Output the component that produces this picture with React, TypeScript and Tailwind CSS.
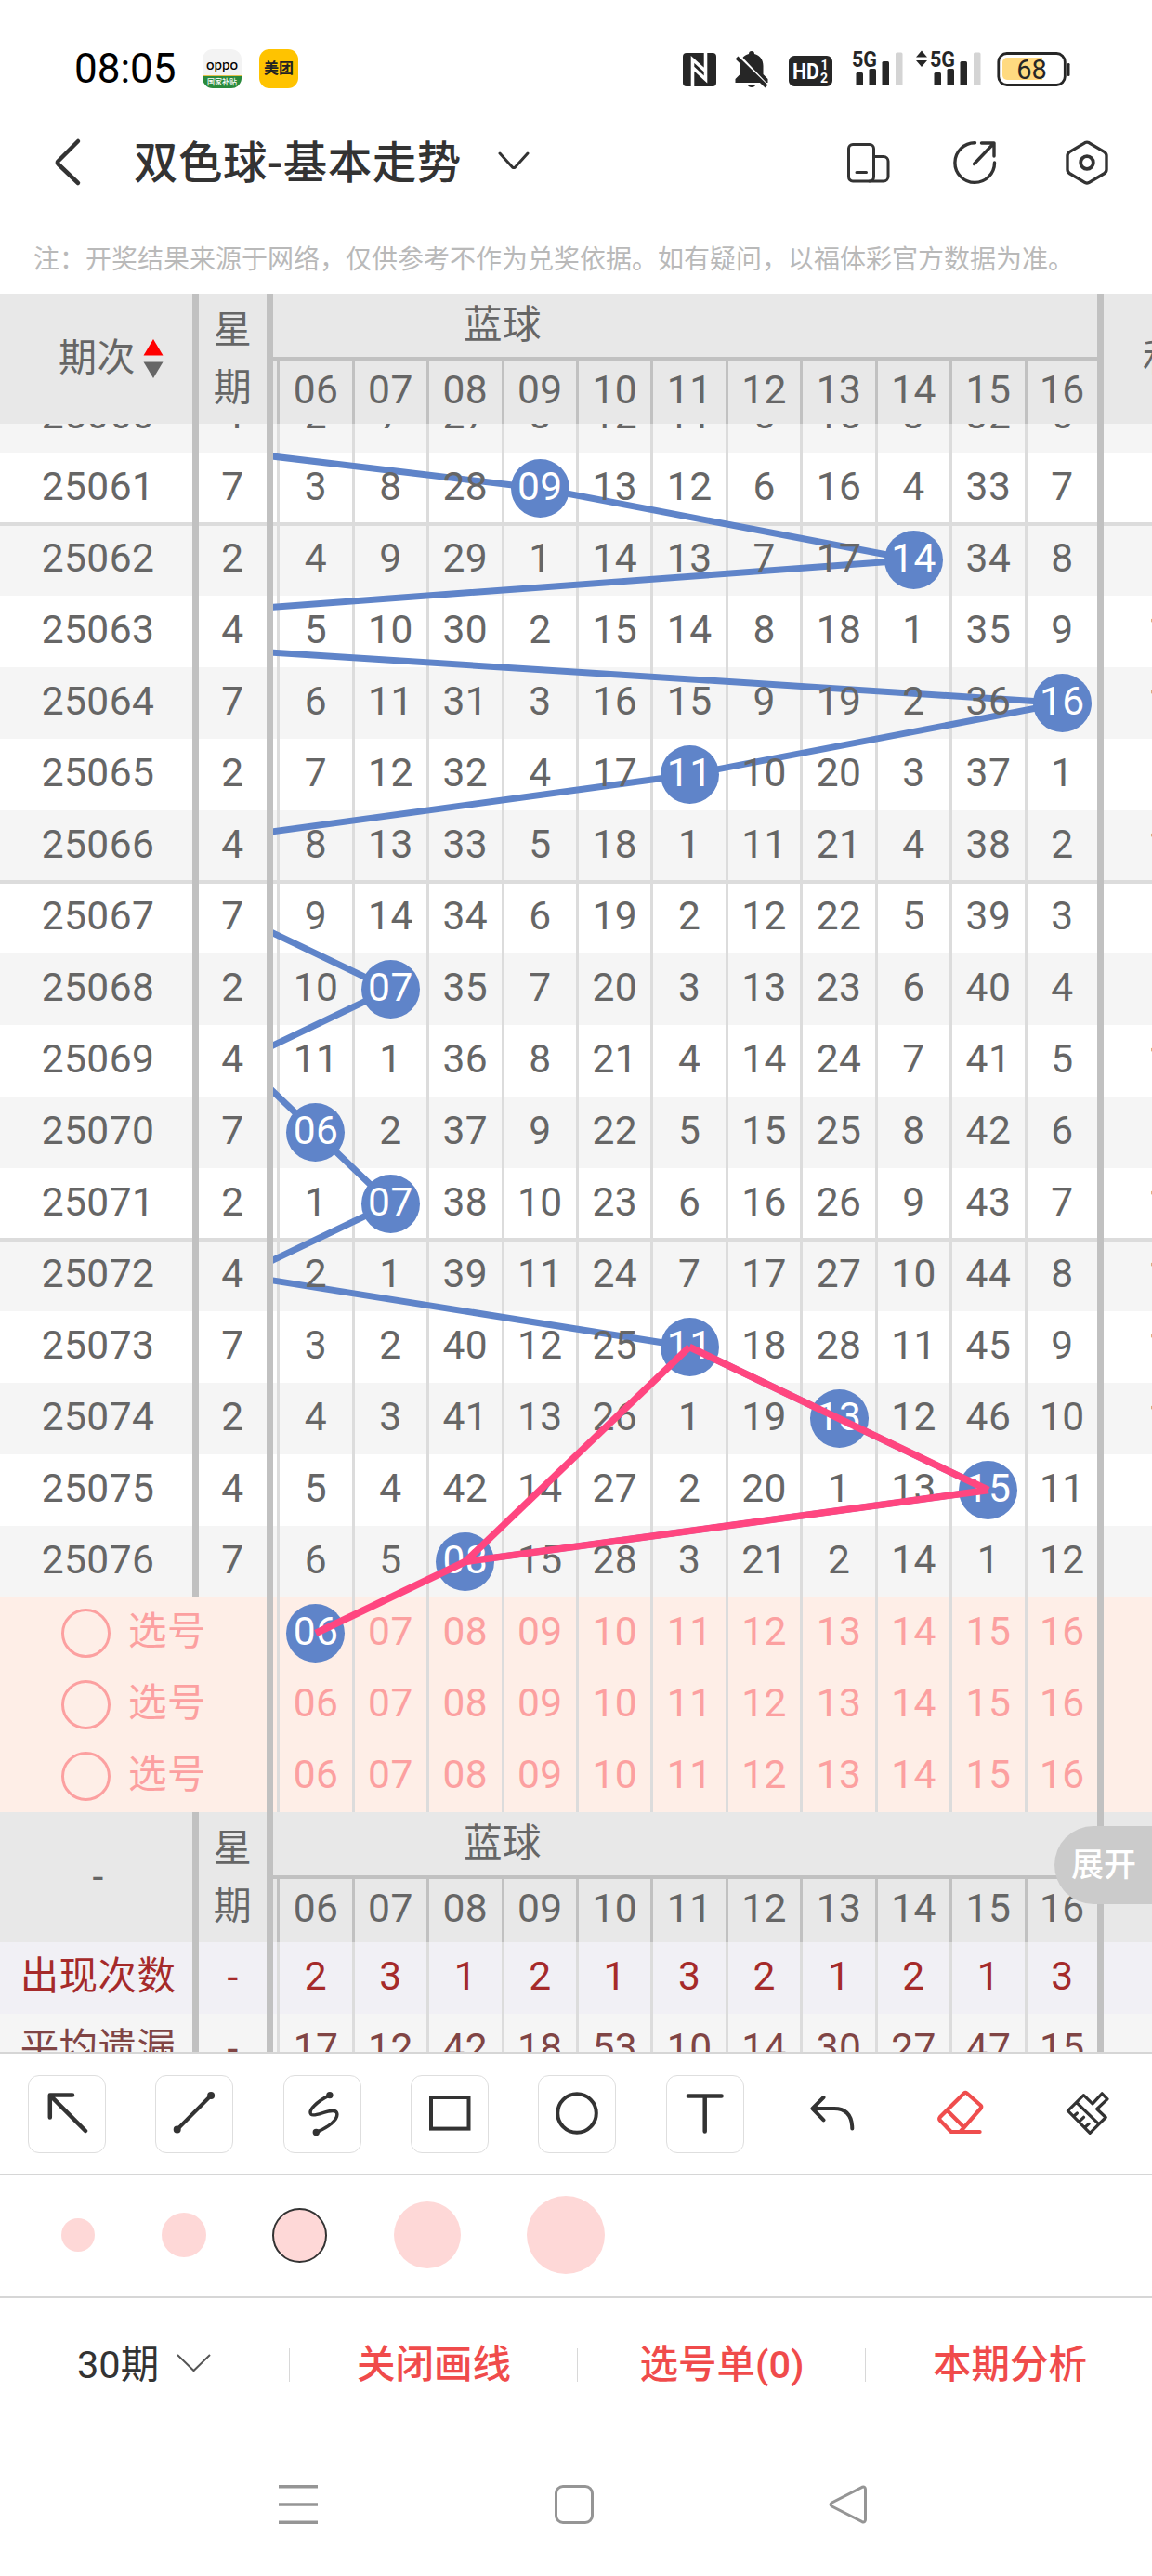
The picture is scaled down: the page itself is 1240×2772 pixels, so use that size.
import React from "react";

interface Period {
  id: string;
  week: string;
  values: number[];
  // winning blue ball, 1 - 16
  ball: number;
  sum?: string;
}

const COLUMNS = [6, 7, 8, 9, 10, 11, 12, 13, 14, 15, 16];
const ROW_HEIGHT = 77;
const COL_WIDTH = 80.45;
const CLIPPED_TOP = 46;

const PERIODS: Period[] = [
  { id: "25060", week: "4", ball: 1, values: [2, 7, 27, 8, 12, 11, 5, 15, 3, 32, 6] },
  { id: "25061", week: "7", ball: 9, values: [3, 8, 28, 9, 13, 12, 6, 16, 4, 33, 7] },
  { id: "25062", week: "2", ball: 14, values: [4, 9, 29, 1, 14, 13, 7, 17, 14, 34, 8] },
  { id: "25063", week: "4", ball: 1, values: [5, 10, 30, 2, 15, 14, 8, 18, 1, 35, 9], sum: "1" },
  { id: "25064", week: "7", ball: 16, values: [6, 11, 31, 3, 16, 15, 9, 19, 2, 36, 16], sum: "1" },
  { id: "25065", week: "2", ball: 11, values: [7, 12, 32, 4, 17, 11, 10, 20, 3, 37, 1] },
  { id: "25066", week: "4", ball: 4, values: [8, 13, 33, 5, 18, 1, 11, 21, 4, 38, 2], sum: "1" },
  { id: "25067", week: "7", ball: 5, values: [9, 14, 34, 6, 19, 2, 12, 22, 5, 39, 3] },
  { id: "25068", week: "2", ball: 7, values: [10, 7, 35, 7, 20, 3, 13, 23, 6, 40, 4] },
  { id: "25069", week: "4", ball: 5, values: [11, 1, 36, 8, 21, 4, 14, 24, 7, 41, 5], sum: "1" },
  { id: "25070", week: "7", ball: 6, values: [6, 2, 37, 9, 22, 5, 15, 25, 8, 42, 6] },
  { id: "25071", week: "2", ball: 7, values: [1, 7, 38, 10, 23, 6, 16, 26, 9, 43, 7], sum: "1" },
  { id: "25072", week: "4", ball: 5, values: [2, 1, 39, 11, 24, 7, 17, 27, 10, 44, 8], sum: "1" },
  { id: "25073", week: "7", ball: 11, values: [3, 2, 40, 12, 25, 11, 18, 28, 11, 45, 9], sum: "1" },
  { id: "25074", week: "2", ball: 13, values: [4, 3, 41, 13, 26, 1, 19, 13, 12, 46, 10], sum: "1" },
  { id: "25075", week: "4", ball: 15, values: [5, 4, 42, 14, 27, 2, 20, 1, 13, 15, 11] },
  { id: "25076", week: "7", ball: 8, values: [6, 5, 8, 15, 28, 3, 21, 2, 14, 1, 12] },
];

const STATS = [
  {
    label: "出现次数",
    values: [2, 3, 1, 2, 1, 3, 2, 1, 2, 1, 3],
    className: "bg-[#f1f0f5] text-[#a52a2a]",
  },
  {
    label: "平均遗漏",
    values: [17, 12, 42, 18, 53, 10, 14, 30, 27, 47, 15],
    className: "bg-[#f5f5f5] text-[#804545]",
  },
];

const pad = (n: number) => String(n).padStart(2, "0");

// Chart coordinates, relative to the left edge of the blue ball area
const ballX = (ball: number) => 45.9 + (ball - 6) * COL_WIDTH;
const rowY = (row: number) => row * ROW_HEIGHT + ROW_HEIGHT / 2 - CLIPPED_TOP;

const trendPoints = PERIODS.map((p, i) => `${ballX(p.ball)},${rowY(i)}`).join(" ");

const userLines = [
  { from: [11, 13], to: [15, 15] },
  { from: [15, 15], to: [8, 16] },
  { from: [11, 13], to: [8, 16] },
  { from: [8, 16], to: [6, 17] },
];

const Bar = () => <div className="w-[7px] shrink-0 bg-[#c1c1c1]" />;

const Ball = ({ value }: { value: number }) => (
  <span className="relative z-10 flex h-[63px] w-[63px] shrink-0 items-center justify-center rounded-full bg-[#5f84c9] pb-[3px] text-white">
    {pad(value)}
  </span>
);

interface NumberCellsProps {
  border: string;
  children: (column: number, index: number) => React.ReactNode;
}

const NumberCells: React.FC<NumberCellsProps> = ({ border, children }) => (
  <div className="flex h-full w-[887px] shrink-0 pl-[4.25px]">
    {COLUMNS.map((column, i) => (
      <div
        key={column}
        className={`flex items-center justify-center border-l-[3px] ${border} ${
          i === COLUMNS.length - 1 ? "min-w-0 flex-1" : "w-[80.45px] shrink-0"
        }`}
      >
        {children(column, i)}
      </div>
    ))}
  </div>
);

const Num = ({ children }: { children: React.ReactNode }) => (
  <span className="relative z-10 pb-[3px]">{children}</span>
);

const TableHeader = ({ label, sum }: { label: React.ReactNode; sum?: string }) => (
  <div className="flex h-[140px] shrink-0 overflow-hidden bg-[#e8e8e8] text-[#666]">
    <div className="flex w-[207px] shrink-0 items-center justify-center">{label}</div>
    <Bar />
    <div className="flex w-[73px] shrink-0 flex-col items-center justify-center pb-px leading-[62px] text-[41px]">
      <span>星</span>
      <span>期</span>
    </div>
    <Bar />
    <div className="flex w-[887px] shrink-0 flex-col">
      <div className="flex h-[68px] items-center pl-[205px] text-[41.5px]">蓝球</div>
      <div className="h-1 bg-[#c1c1c1]" />
      <div className="h-[68px]">
        <NumberCells border="border-[#c1c1c1]">{(c) => <Num>{pad(c)}</Num>}</NumberCells>
      </div>
    </div>
    <Bar />
    <div className="flex w-[52px] shrink-0 items-center overflow-hidden pl-[42px]">{sum}</div>
  </div>
);

const StatusBar = () => (
  <div className="flex h-[125px] items-center pl-20 pr-[87px] pt-[23px]">
    <span className="w-[138px] text-[44px] leading-none text-black">08:05</span>
    <div className="mr-[19px] flex h-[42px] w-[42px] flex-col items-center overflow-hidden rounded-[11px] bg-[#f3f3f3]">
      <span className="h-7 font-['Lato'] text-[15px] font-medium leading-[33px] text-black">oppo</span>
      <span className="flex h-[14px] w-full items-center justify-center border-t border-[#e7c14b] bg-[#2a8a3c] text-[8px] font-medium leading-none text-white">
        国家补贴
      </span>
    </div>
    <div className="flex h-[42px] w-[42px] items-center justify-center rounded-[11px] bg-[#ffc300] text-[16px] font-bold leading-none text-[#222]">
      美团
    </div>
    <svg className="ml-auto h-[44px] w-[420px]" viewBox="733 52 420 44" fill="#262626">
      {/* NFC */}
      <rect x="735" y="57" width="36" height="36" rx="4" />
      <path d="M745.5 93V64l14.5 13M759.5 57v28.5L746 73" fill="none" stroke="#fff" strokeWidth="3.6" />
      {/* muted bell */}
      <path d="M809 55c2 0 3 1.200 3 3 6 1.500 9.500 6 9.500 13v9l5 5v4h-35v-4l5-5v-9c0-7 3.500-11.500 9.500-13 0-1.800 1-3 3-3zM804.500 91h9c-1 4-8 4-9 0z" />
      <path d="M795 60l33 35" stroke="#fff" strokeWidth="4" />
      <path d="M793 62l32 31" stroke="#262626" strokeWidth="4" />
      {/* HD 1/2 */}
      <rect x="849" y="60" width="47" height="33" rx="6" />
      <g fill="#fff" fontWeight="700">
        <text x="853" y="85" fontSize="24" textLength="29" lengthAdjust="spacingAndGlyphs">HD</text>
        <text x="883.500" y="75" fontSize="14">1</text>
        <text x="883" y="89" fontSize="14">2</text>
      </g>
      <g fontWeight="700" fontSize="24">
        <text x="917" y="71.500" textLength="27" lengthAdjust="spacingAndGlyphs">5G</text>
        <text x="1001" y="71.500" textLength="27" lengthAdjust="spacingAndGlyphs">5G</text>
      </g>
      {[0, 84].map((dx) => (
        <g key={dx} transform={`translate(${dx} 0)`}>
          <rect x="921.500" y="78" width="7.500" height="14" rx="1.500" />
          <rect x="935.500" y="74" width="7.500" height="18" rx="1.500" />
          <rect x="949.500" y="66" width="7.500" height="26" rx="1.500" />
          <rect x="964" y="56.500" width="7.500" height="35.500" rx="1.500" fill="#d4d4d4" />
        </g>
      ))}
      <path d="M992 54.500l6 7h-12zM992 72l6-7h-12z" />
      {/* battery */}
      <rect x="1074.800" y="57.500" width="71.500" height="34" rx="9" fill="none" stroke="#262626" strokeWidth="2.800" />
      <path d="M1084 62h38v24h-38a5 5 0 0 1-5-5V67a5 5 0 0 1 5-5z" fill="#ffda80" />
      <rect x="1148.800" y="68" width="2.700" height="14" rx="1.300" />
      <text x="1110.500" y="84.500" fontSize="29" textAnchor="middle">68</text>
    </svg>
  </div>
);

const TitleBar = () => (
  <div className="flex h-[100px] items-center pl-[58px] pr-[45px] text-[#333]">
    <svg className="h-[54px] w-[30px]" viewBox="0 0 30 54" fill="none" stroke="currentColor" strokeWidth="4.500" strokeLinecap="round" strokeLinejoin="round">
      <path d="M26 4L4.500 25.500a2 2 0 0 0 0 3L26 49" />
    </svg>
    <h1 className="ml-14 pt-[3px] text-[47.5px] font-medium leading-none tracking-[0.5px]">双色球-基本走势</h1>
    <svg className="ml-[38px] h-6 w-9" viewBox="0 0 36 24" fill="none" stroke="currentColor" strokeWidth="3" strokeLinecap="round" strokeLinejoin="round">
      <path d="M3 2l14 15.500h2L33 2" />
    </svg>
    <svg className="ml-auto h-[50px] w-[50px]" viewBox="0 0 50 50" fill="none" stroke="currentColor" strokeWidth="3">
      <rect x="3.500" y="5.500" width="27" height="39.500" rx="4.500" />
      <path d="M30.500 18.500H41a5 5 0 0 1 5 5V40a5 5 0 0 1-5 5H26M12 35.500h10.500" strokeLinecap="round" />
    </svg>
    <svg className="ml-[64px] h-[50px] w-[50px]" viewBox="0 0 50 50" fill="none" stroke="currentColor" strokeWidth="3.400" strokeLinecap="round" strokeLinejoin="round">
      <path d="M25.500 3.800A21.300 21.300 0 1 0 46.500 25M32.500 4H46v14M46 4L24.500 26.500" />
    </svg>
    <svg className="ml-[71px] h-[50px] w-[50px]" viewBox="0 0 50 50" fill="none" stroke="currentColor" strokeWidth="3.400" strokeLinejoin="round">
      <path d="M27 3.600l16.500 9.800q2.500 1.600 2.500 4.200v15q0 2.600-2.500 4.200L27 46.600q-2 1-4 0L6.500 36.800Q4 35.200 4 32.600v-15q0-2.600 2.500-4.200L23 3.600q2-1 4 0z" />
      <circle cx="25" cy="25" r="6.800" strokeWidth="3.800" />
    </svg>
  </div>
);

const TrendTable = () => (
  <div className="relative h-[1752px] shrink-0 overflow-hidden">
    <div className="-mt-[46px] text-[#666]">
      {PERIODS.map((p, row) => {
        const startsGroup = row % 5 === 2;
        const endsGroup = row % 5 === 1 && row < 15;
        const stripe = row % 2 === 0 ? "bg-[#f5f5f5]" : "bg-white";
        const line = startsGroup
          ? "shadow-[inset_0_2px_0_#dcdcdc]"
          : endsGroup
            ? "shadow-[inset_0_-2px_0_#dcdcdc]"
            : "";
        return (
          <div key={p.id} className={`flex h-[77px] ${stripe} ${line}`}>
            <div className="flex w-[207px] shrink-0 items-center justify-center pl-1">
              <Num>{p.id}</Num>
            </div>
            <Bar />
            <div className="flex w-[73px] shrink-0 items-center justify-center">
              <Num>{p.week}</Num>
            </div>
            <Bar />
            <NumberCells border="border-[#dcdcdc]">
              {(column, i) => (column === p.ball ? <Ball value={column} /> : <Num>{p.values[i]}</Num>)}
            </NumberCells>
            <Bar />
            <div className="flex w-[52px] shrink-0 items-center overflow-hidden pl-12">
              <Num>{p.sum}</Num>
            </div>
          </div>
        );
      })}

      {[0, 1, 2].map((row) => (
        <div key={row} className="flex h-[77px] bg-[#feeee7] text-[#fca0a0]">
          <div className="flex w-[287px] shrink-0 items-center pl-[66px]">
            <span className="h-[53px] w-[53px] rounded-full border-[3px] border-[#fca0a0]" />
            <span className="ml-[19px] pb-[3px] text-[41.5px]">选号</span>
          </div>
          <Bar />
          <NumberCells border="border-[#dcdcdc]">
            {(column) => (row === 0 && column === 6 ? <Ball value={6} /> : <Num>{pad(column)}</Num>)}
          </NumberCells>
          <Bar />
        </div>
      ))}

      <TableHeader label={<span className="pl-1">-</span>} />

      {STATS.map((s) => (
        <div key={s.label} className={`flex h-[77px] ${s.className}`}>
          <div className="flex w-[207px] shrink-0 items-center justify-center pb-[3px] pl-1 text-[41.5px]">{s.label}</div>
          <Bar />
          <div className="flex w-[73px] shrink-0 items-center justify-center">-</div>
          <Bar />
          <NumberCells border="border-[#dcdcdc]">{(_, i) => <Num>{s.values[i]}</Num>}</NumberCells>
          <Bar />
        </div>
      ))}
    </div>

    <svg className="absolute left-[294px] top-0 h-[1494px] w-[887px]" fill="none">
      <polyline points={trendPoints} stroke="#5f84c9" strokeWidth="7" />
    </svg>
    <svg className="absolute left-[294px] top-0 z-20 h-[1494px] w-[887px]" stroke="#ff4680" strokeWidth="7.500">
      {userLines.map(({ from, to }, i) => (
        <line key={i} x1={ballX(from[0])} y1={rowY(from[1])} x2={ballX(to[0])} y2={rowY(to[1])} />
      ))}
    </svg>

    <button className="absolute right-0 top-[1509px] z-30 flex h-[84px] w-[105px] items-center rounded-l-full bg-[#cbcbcb] pl-[18px] pt-px text-[35px] font-medium tracking-normal text-white">
      展开
    </button>
  </div>
);

const TOOLS = [
  {
    name: "arrow",
    boxed: true,
    icon: <path d="M50 48L12 9.800M36 9.500H11.800V33.500" strokeWidth="4.500" />,
  },
  {
    name: "line",
    boxed: true,
    icon: (
      <>
        <path d="M11.700 46.500L48.100 10" />
        <circle cx="11.700" cy="46.500" r="2" />
        <circle cx="48.100" cy="10" r="2" />
      </>
    ),
  },
  {
    name: "curve",
    boxed: true,
    icon: (
      <>
        <path d="M37.900 9.600C24 16.500 14 26 18 30.300C22 34 42 21.500 45.500 28.500C48 35.500 36 44.500 23.300 49.500" strokeWidth="3.500" />
        <circle cx="37.900" cy="9.600" r="1.700" />
        <circle cx="23.300" cy="49.500" r="1.700" />
      </>
    ),
  },
  {
    name: "rect",
    boxed: true,
    icon: <rect x="10" y="12" width="40.500" height="33.600" strokeLinejoin="miter" />,
  },
  { name: "circle", boxed: true, icon: <circle cx="30" cy="29" r="20.800" /> },
  { name: "text", boxed: true, icon: <path d="M11.800 10.400h35.800M29.700 10.400v38" strokeWidth="4.500" /> },
  {
    name: "undo",
    boxed: false,
    icon: <path d="M20.500 12L8.500 24L20.500 36.300M8.500 24H32Q51 24 51.300 45.500" />,
  },
  {
    name: "eraser",
    boxed: false,
    icon: (
      <path
        d="M36.700 7.500L51.500 20.500Q53 22 51.500 24L29.500 49H19.800L8 36.700Q6.400 35 8 33L33.800 7.500Q35.200 6.200 36.700 7.500zM16.500 27L33 43.500M19.800 49H50.600"
        stroke="#ef4d4d"
        strokeWidth="4.200"
      />
    ),
  },
  {
    name: "clear",
    boxed: false,
    icon: (
      <path
        d="M25.400 9.600L35 18.800L45.200 7.800L51 13.800L39.700 24.500L49.200 33.500L32.200 50.300L8.500 26.400zM18.300 18L40.900 39.900M14.800 32.200l3.600-3.200M20.500 38.200l5-4.900M26.800 44.200l4.200-3.800"
        strokeWidth="3.200"
      />
    ),
  },
];

const Toolbar = () => (
  <div className="grid h-[129px] shrink-0 grid-cols-9 items-center pl-[3px]">
    {TOOLS.map((tool) => (
      <div key={tool.name} className="flex justify-center">
        <div
          className={`flex h-[84px] w-[84px] items-center justify-center ${
            tool.boxed ? "rounded-xl border border-[#dedede]" : ""
          }`}
        >
          <svg
            className="h-[60px] w-[60px]"
            viewBox="0 0 60 60"
            fill="none"
            stroke="#333"
            strokeWidth="4"
            strokeLinecap="round"
            strokeLinejoin="round"
          >
            {tool.icon}
          </svg>
        </div>
      </div>
    ))}
  </div>
);

const StrokeSizes = () => (
  <div className="flex h-[132px] shrink-0 items-center gap-[71.5px] border-t-2 border-[#d6d6d6] pb-0.5 pl-[66px]">
    <span className="h-9 w-9 rounded-full bg-[#fed8d7]" />
    <span className="h-12 w-12 rounded-full bg-[#fed8d7]" />
    <span className="h-[59px] w-[59px] rounded-full border-2 border-[#333] bg-[#fed8d7]" />
    <span className="h-[72px] w-[72px] rounded-full bg-[#fed8d7]" />
    <span className="h-[84px] w-[84px] rounded-full bg-[#fed8d7]" />
  </div>
);

const BottomTabs = () => (
  <div className="grid h-[146px] shrink-0 grid-cols-4 items-center border-t-2 border-[#d6d6d6] text-[41.5px] text-[#f04b4b]">
    <div className="flex items-center pl-[83px] text-[#333]">
      <span className="leading-none">30期</span>
      <svg className="mb-1 ml-[18px] h-5 w-10" viewBox="0 0 40 20" fill="none" stroke="#555" strokeWidth="2">
        <path d="M2 1l17.500 17L37 1" />
      </svg>
    </div>
    {["关闭画线", "选号单(0)", "本期分析"].map((label) => (
      <div key={label} className="flex items-center pl-px font-medium">
        <span className="h-9 w-px bg-[#d8d8d8]" />
        <span className="flex-1 pl-0.5 text-center leading-none">{label}</span>
      </div>
    ))}
  </div>
);

const SystemNav = () => (
  <div className="flex flex-1 items-start px-[300px] pt-[57px]">
    <svg className="h-[42px] w-[42px]" viewBox="0 0 42 42" stroke="#959595" strokeWidth="3.500">
      <path d="M0 1.750h42M0 21h42M0 40.250h42" />
    </svg>
    <span className="ml-[255px] h-[42px] w-[42px] rounded-[9px] border-[3px] border-[#959595]" />
    <svg className="ml-[252px] h-[42px] w-[44px]" viewBox="0 0 44 42" fill="none" stroke="#959595" strokeWidth="3">
      <path d="M37 2.300L4.500 19q-3 2 0 4L37 39.700q3.500 1 3.500-2.500V4.800q0-3.500-3.500-2.500z" />
    </svg>
  </div>
);

const App: React.FC = () => {
  return (
    <div className="flex h-[2772px] w-[1240px] flex-col overflow-hidden bg-white font-['Roboto','Noto_Sans_CJK_SC',sans-serif]">
      <StatusBar />
      <TitleBar />
      <p className="h-[91px] whitespace-nowrap pl-9 pt-[35px] text-[28px] leading-[40px] text-[#b9b9b9]">
        注：开奖结果来源于网络，仅供参考不作为兑奖依据。如有疑问，以福体彩官方数据为准。
      </p>
      <div className="shrink-0 text-[42.5px] leading-none tracking-[0.4px]">
        <TableHeader
          sum="和"
          label={
            <div className="flex items-center gap-2 pl-8">
              <span className="pb-0.5 text-[41px]">期次</span>
              <svg className="h-[42px] w-[22px]" viewBox="0 0 22 42">
                <path d="M11 0l10.500 17.500H.5z" fill="#f00" />
                <path d="M11 42l10.500-17.500H.5z" fill="#666" />
              </svg>
            </div>
          }
        />
        <TrendTable />
      </div>
      <div className="h-0.5 shrink-0 bg-[#d6d6d6]" />
      <Toolbar />
      <StrokeSizes />
      <BottomTabs />
      <SystemNav />
    </div>
  );
};

export default App;
